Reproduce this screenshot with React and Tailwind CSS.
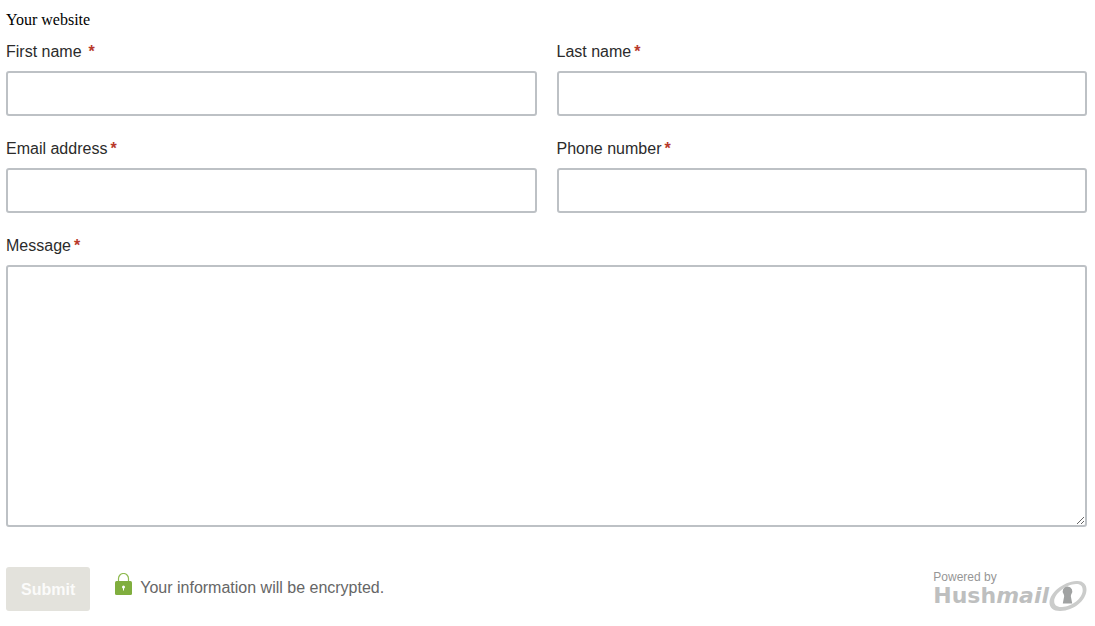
import React, { useState } from 'react';

const inputClass =
  'block w-full rounded-[3px] border-2 border-[#bdc1c5] bg-white px-3 text-base text-[#222] focus:outline-none focus:border-[#7fae3f]';

const Label = ({ id, text, spaced }) => (
  <label htmlFor={id} className="flex mb-[9px] text-base leading-5 text-[#2b2b2b]">
    {text}
    <span className={`font-bold text-[#b8392b] ${spaced ? 'ml-[7px]' : 'ml-[3px]'}`}>*</span>
  </label>
);

const Field = ({ id, text, type = 'text', spaced }) => (
  <div>
    <Label id={id} text={text} spaced={spaced} />
    <input id={id} name={id} type={type} className={`${inputClass} h-[45px]`} />
  </div>
);

const LockIcon = () => (
  <svg width="17" height="23" viewBox="0 0 17 23" aria-hidden="true">
    <path d="M3.5 9V5.5a5 5 0 0 1 10 0V9" fill="none" stroke="#8fba50" strokeWidth="1.2" />
    <rect y="8" width="17" height="14" rx="1.5" fill="#80ae3e" />
    <circle cx="8.5" cy="14" r="1.5" fill="#fff" />
    <path d="M8 14h1v3.5h-1z" fill="#fff" />
  </svg>
);

const KeyholeIcon = () => (
  <svg width="38" height="32" viewBox="0 0 38 32" aria-hidden="true">
    {/* Ring is thicker on the lower left, so the inner ellipse is shifted */}
    <path
      fill="#cbcccb"
      fillRule="evenodd"
      d="M27.500 1C33.500 .5 37.800 4 37.500 10C37 20.500 25 30.500 11.500 31C4.500 31.200 .5 28 .5 22.500C.6 13 14 1.800 27.500 1ZM27 4C17 4.500 5.500 13.500 5.200 21C5 25 8 27.300 13 27C23.500 26.500 33.500 18 33.700 10.500C33.800 6 31.500 3.800 27 4Z"
    />
    <path
      fill="#a0a2a2"
      d="M18.500 6.500a4.800 4.800 0 0 1 3.700 7.900L21.800 16L23.200 23.500H13.800L15.200 16L14.800 14.400A4.800 4.800 0 0 1 18.500 6.500Z"
    />
  </svg>
);

const PoweredBy = () => (
  <a href="#hushmail" className="flex flex-col pt-0.5">
    <span className="text-xs leading-4 text-[#969696]">Powered by</span>
    <span className="flex items-center h-[22px]">
      <span className="font-['DejaVu_Sans',sans-serif] text-[22px] leading-5 font-bold text-[#bebfbf]">
        Hush<i>mail</i>
      </span>
      <KeyholeIcon />
    </span>
  </a>
);

export default function App() {
  const [message, setMessage] = useState('');

  return (
    <div className="bg-white pl-1.5 pr-2 pt-2.5 pb-4 font-['Liberation_Sans',sans-serif]">
      <p className="mb-3 font-['Liberation_Serif',serif] text-base leading-5 text-black">Your website</p>

      <form onSubmit={(e) => e.preventDefault()}>
        <div className="grid grid-cols-2 gap-x-5 gap-y-[23px]">
          <Field id="first-name" text="First name" spaced />
          <Field id="last-name" text="Last name" />
          <Field id="email" text="Email address" type="email" />
          <Field id="phone" text="Phone number" type="tel" />
          <div className="col-span-2">
            <Label id="message" text="Message" />
            <textarea
              id="message"
              name="message"
              value={message}
              onChange={(e) => setMessage(e.target.value)}
              className={`${inputClass} h-[262px] py-2 resize`}
            />
          </div>
        </div>

        <div className="mt-10 flex items-start justify-between">
          <div className="flex items-start">
            <button type="submit" className="h-11 px-[15px] pt-0.5 rounded-[3px] bg-[#e3e2dc] text-base font-bold text-[#fbfbfa]">
              Submit
            </button>
            <span className="ml-[25px] mt-1.5 flex items-start gap-x-2 text-base text-[#666]">
              <LockIcon />
              <span className="pt-[5px] leading-5">Your information will be encrypted.</span>
            </span>
          </div>
          <PoweredBy />
        </div>
      </form>
    </div>
  );
}
